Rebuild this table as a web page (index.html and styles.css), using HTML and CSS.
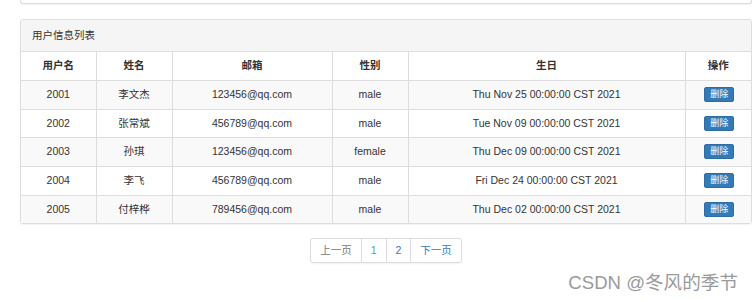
FILE: index.html
```html
<!DOCTYPE html>
<html lang="zh-CN">
<head>
  <meta charset="UTF-8">
  <title>用户信息列表</title>
  <link rel="stylesheet" href="styles.css">
</head>
<body>
  <div class="container">
    <div class="panel panel-top"></div>

    <div class="panel">
      <div class="panel-heading">用户信息列表</div>
      <table class="user-table">
        <colgroup>
          <col class="c-id">
          <col class="c-name">
          <col class="c-mail">
          <col class="c-sex">
          <col class="c-birth">
          <col class="c-op">
        </colgroup>
        <thead>
          <tr>
            <th>用户名</th>
            <th>姓名</th>
            <th>邮箱</th>
            <th>性别</th>
            <th>生日</th>
            <th>操作</th>
          </tr>
        </thead>
        <tbody>
          <tr>
            <td>2001</td>
            <td>李文杰</td>
            <td>123456@qq.com</td>
            <td>male</td>
            <td>Thu Nov 25 00:00:00 CST 2021</td>
            <td><a href="#" class="btn-del">删除</a></td>
          </tr>
          <tr>
            <td>2002</td>
            <td>张常斌</td>
            <td>456789@qq.com</td>
            <td>male</td>
            <td>Tue Nov 09 00:00:00 CST 2021</td>
            <td><a href="#" class="btn-del">删除</a></td>
          </tr>
          <tr>
            <td>2003</td>
            <td>孙琪</td>
            <td>123456@qq.com</td>
            <td>female</td>
            <td>Thu Dec 09 00:00:00 CST 2021</td>
            <td><a href="#" class="btn-del">删除</a></td>
          </tr>
          <tr>
            <td>2004</td>
            <td>李飞</td>
            <td>456789@qq.com</td>
            <td>male</td>
            <td>Fri Dec 24 00:00:00 CST 2021</td>
            <td><a href="#" class="btn-del">删除</a></td>
          </tr>
          <tr>
            <td>2005</td>
            <td>付梓桦</td>
            <td>789456@qq.com</td>
            <td>male</td>
            <td>Thu Dec 02 00:00:00 CST 2021</td>
            <td><a href="#" class="btn-del">删除</a></td>
          </tr>
        </tbody>
      </table>
    </div>

    <div class="pager-wrap">
      <ul class="pagination">
        <li class="disabled"><a href="#">上一页</a></li>
        <li class="current"><a href="#">1</a></li>
        <li><a href="#">2</a></li>
        <li><a href="#">下一页</a></li>
      </ul>
    </div>
  </div>

  <div class="watermark">CSDN @冬风的季节</div>
</body>
</html>
```

FILE: styles.css
```css
body {
  font-family: "Liberation Sans", Arial, "Noto Sans CJK SC", sans-serif;
  font-size: 10.5px;
  line-height: 15.7px;
  color: #333;
  background-color: #fff;
  margin: 0;
  padding: 0;
}
.container {
  margin: 0 3px 0 20px;
}
.panel {
  background-color: #fff;
  border: 1px solid #ddd;
  border-radius: 3px;
  box-shadow: 0 1px 1px rgba(0,0,0,0.05);
  margin-bottom: 15px;
}
.panel-top {
  height: 3px;
  border-top: none;
  border-radius: 0 0 3px 3px;
}
.panel-heading {
  background-color: #f5f5f5;
  border-bottom: 1px solid #ddd;
  padding: 7.5px 11px;
  border-radius: 3px 3px 0 0;
}
.user-table {
  width: 100%;
  border-collapse: collapse;
  table-layout: fixed;
}
.c-id { width: 75px; }
.c-name { width: 76px; }
.c-mail { width: 160px; }
.c-sex { width: 76px; }
.c-birth { width: 277px; }
.user-table th,
.user-table td {
  padding: 6px;
  text-align: center;
  border-left: 1px solid #ddd;
  border-top: 1px solid #ddd;
  white-space: nowrap;
}
.user-table th {
  font-weight: bold;
  border-top: none;
  padding: 6.5px 6px 6px;
}
.user-table th:first-child,
.user-table td:first-child {
  border-left: none;
}
.user-table tbody tr:nth-child(odd) {
  background-color: #f9f9f9;
}
.btn-del {
  display: inline-block;
  background-color: #337ab7;
  border: 1px solid #2e6da4;
  color: #fff;
  font-size: 9px;
  line-height: 13px;
  padding: 0 5px;
  margin-left: 2px;
  border-radius: 2px;
  text-decoration: none;
  vertical-align: top;
}
.pager-wrap {
  display: flex;
  justify-content: center;
}
.pagination {
  display: flex;
  list-style: none;
  margin: -1px 0 0;
  padding: 0;
  border-radius: 3px;
  box-shadow: 0 1px 2px rgba(0,0,0,0.06);
}
.pagination a {
  display: block;
  padding: 4px 9px;
  line-height: 15px;
  color: #337ab7;
  text-decoration: none;
  border: 1px solid #ddd;
  margin-left: -1px;
  background-color: #fff;
}
.pagination li:first-child a {
  margin-left: 0;
  border-radius: 3px 0 0 3px;
}
.pagination li:last-child a {
  border-radius: 0 3px 3px 0;
}
.pagination .disabled a {
  color: #777;
}
.pagination .current a {
  color: #5b97cc;
}
.watermark {
  text-align: right;
  font-size: 18.6px;
  line-height: 22px;
  color: #9a9a9a;
  padding: 9px 17px 0 0;
}
```
